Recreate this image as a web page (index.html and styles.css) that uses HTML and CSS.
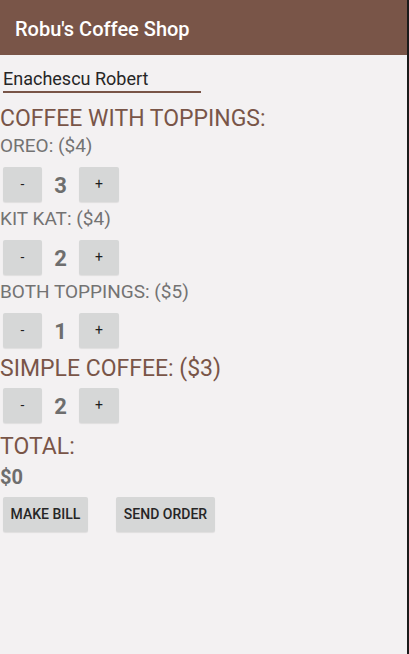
FILE: index.html
```html
<!DOCTYPE html>
<html>
<head>
<meta charset="utf-8">
<link rel="stylesheet" href="styles.css">
</head>
<body>
<div class="app">
  <header class="toolbar">Robu's Coffee Shop</header>
  <main class="content">
    <div class="name">Enachescu Robert</div>
    <div class="heading first">COFFEE WITH TOPPINGS:</div>
    <div class="label first-label">OREO: ($4)</div>
    <div class="counter">
      <button class="btn minus">-</button><span class="qty">3</span><button class="btn plus">+</button>
    </div>
    <div class="label">KIT KAT: ($4)</div>
    <div class="counter">
      <button class="btn minus">-</button><span class="qty">2</span><button class="btn plus">+</button>
    </div>
    <div class="label">BOTH TOPPINGS: ($5)</div>
    <div class="counter">
      <button class="btn minus">-</button><span class="qty">1</span><button class="btn plus">+</button>
    </div>
    <div class="heading simple">SIMPLE COFFEE: ($3)</div>
    <div class="counter close">
      <button class="btn minus">-</button><span class="qty">2</span><button class="btn plus">+</button>
    </div>
    <div class="heading total">TOTAL:</div>
    <div class="amount">$0</div>
    <div class="actions">
      <button class="btn action bill">MAKE BILL</button>
      <button class="btn action send">SEND ORDER</button>
    </div>
  </main>
</div>
</body>
</html>
```
FILE: styles.css
```css
html, body {
  margin: 0;
  padding: 0;
  height: 100%;
}
body {
  background: #1b1b1b;
  font-family: Roboto, "Liberation Sans", sans-serif;
}
.app {
  box-sizing: border-box;
  width: 407px;
  height: 100%;
  background: #f3f1f2;
  display: flex;
  flex-direction: column;
}
.toolbar {
  box-sizing: border-box;
  height: 55px;
  padding: 3px 0 0 15px;
  line-height: 52px;
  background: #795548;
  color: #ffffff;
  font-size: 20px;
  font-weight: 500;
}
.content {
  display: flex;
  flex-direction: column;
  align-items: flex-start;
}
.name {
  margin: 13.2px 0 0 3px;
  width: 198px;
  font-size: 18px;
  line-height: 21px;
  color: #262626;
  padding-bottom: 1.8px;
  border-bottom: 2px solid #795548;
}
.heading {
  font-size: 23px;
  line-height: 27px;
  color: #795548;
}
.heading.first { margin-top: 11.6px; }
.heading.simple { margin-top: 7.3px; }
.heading.total { margin-top: 9.6px; }
.label {
  font-size: 19px;
  line-height: 22px;
  color: #737373;
  margin-top: 6.2px;
}
.label.first-label { margin-top: 3.6px; }
.counter {
  display: flex;
  align-items: center;
  margin: 9.8px 0 0 3px;
  height: 35px;
}
.counter.close { margin-top: 5.7px; }
.btn {
  border: none;
  border-radius: 2px;
  background: #d6d7d7;
  box-shadow: 0 1px 1px rgba(0, 0, 0, 0.08);
  font-family: Roboto, "Liberation Sans", sans-serif;
  font-size: 14px;
  color: #1f1f1f;
  padding: 0;
  height: 35px;
}
.minus { width: 39px; }
.plus { width: 40px; }
.qty {
  width: 37px;
  text-align: center;
  font-size: 22px;
  font-weight: 700;
  color: #6e6e6e;
  line-height: 35px;
  padding-top: 2px;
}
.amount {
  margin-top: 5.6px;
  font-size: 20px;
  line-height: 24px;
  font-weight: 700;
  color: #6e6e6e;
}
.actions {
  display: flex;
  gap: 28px;
  margin: 7.8px 0 0 3px;
}
.action {
  font-weight: 500;
  color: #262626;
}
.bill { width: 85px; }
.send { width: 99px; }
```
